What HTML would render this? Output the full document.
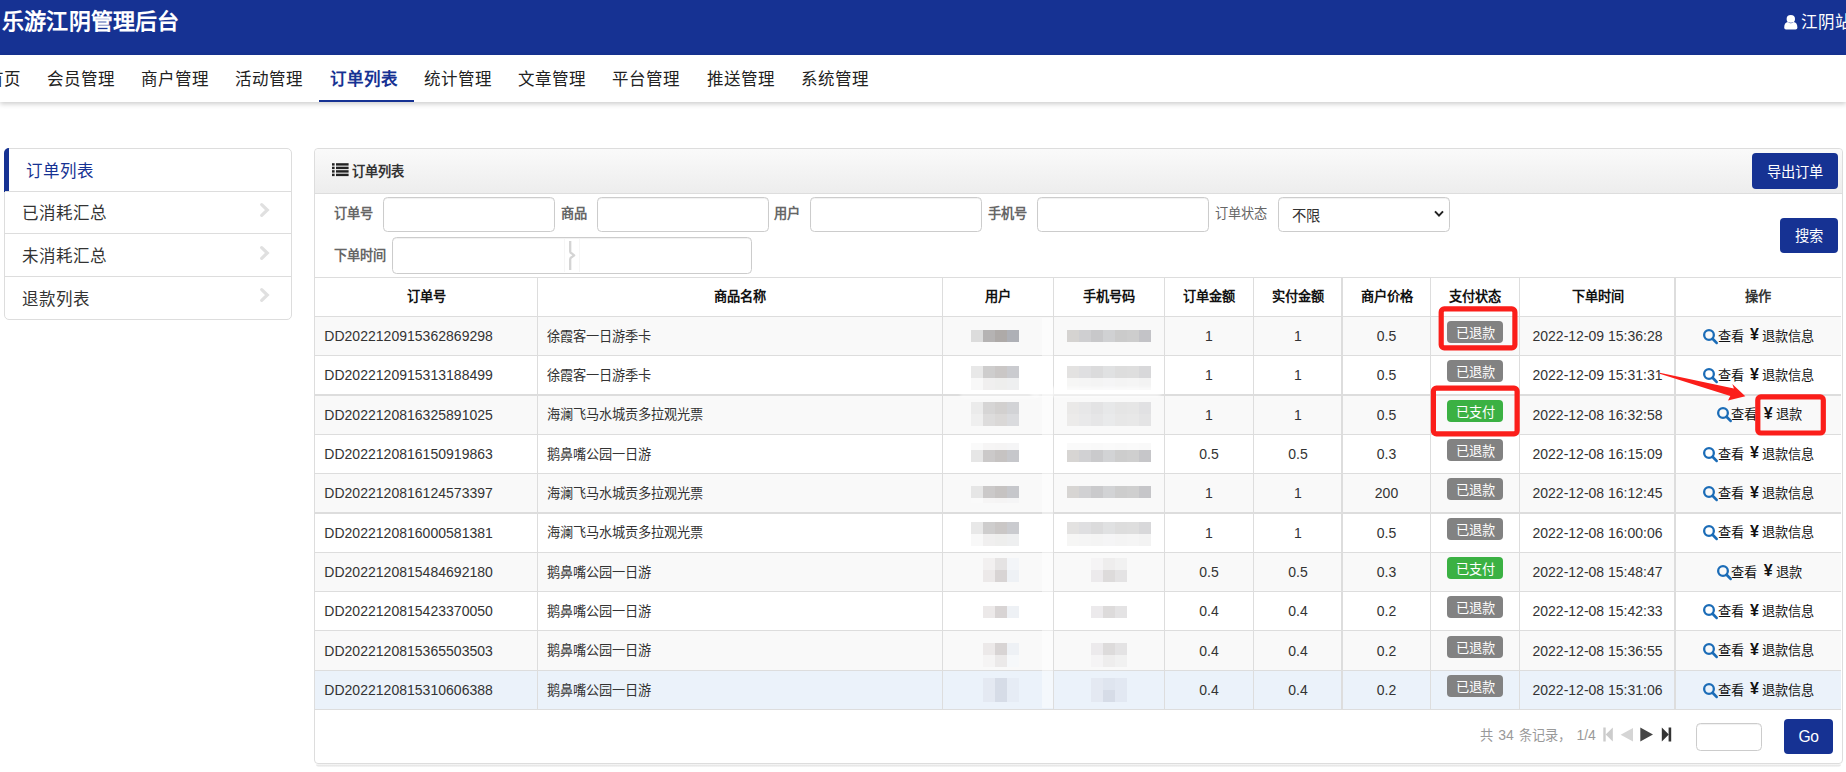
<!DOCTYPE html>
<html lang="zh-CN">
<head>
<meta charset="utf-8">
<title>乐游江阴管理后台</title>
<style>
*{box-sizing:border-box;margin:0;padding:0}
html,body{width:1846px;height:772px;overflow:hidden;background:#fff}
body{position:relative;font-family:"Liberation Sans",sans-serif;font-size:13.2px;color:#333}
.abs{position:absolute;white-space:nowrap}
#hdr{left:0;top:0;width:1846px;height:55px;background:#163293}
#title{left:2px;top:8.3px;font-size:22px;font-weight:bold;color:#fff;line-height:28px;letter-spacing:0.2px}
#user{left:1801px;top:9px;font-size:16.5px;color:#fff;line-height:26px}
#nav{left:0;top:55px;width:1846px;height:47px;background:#fff;box-shadow:0 2px 5px rgba(0,0,0,.2)}
.nv{top:66.1px;font-size:16.5px;line-height:26px;color:#222}
.nv.on{color:#163293;font-weight:bold}
#uline{left:319px;top:100px;width:95px;height:2px;background:#163293}
#side{left:4px;top:148px;width:288px;height:172px;border:1px solid #ddd;border-radius:5px;background:#fff}
.si{left:0;width:286px;border-top:1px solid #ddd;font-size:16.5px;color:#333}
.si span{position:absolute;left:17px;line-height:26px}
.chev{position:absolute;left:255px}
#panel{left:314px;top:148px;width:1529px;height:616px;border:1px solid #ddd;border-radius:4px;background:#fff}
#phead{left:315px;top:149px;width:1527px;height:45px;border-bottom:1px solid #ddd;border-radius:4px 4px 0 0;background:linear-gradient(#fafafa,#ededed)}
.btn{background:#163293;color:#fff;border-radius:4px;text-align:center;font-size:14.3px}
.lab{font-size:13.2px;font-weight:bold;color:#666;line-height:20px}
.inp{border:1px solid #ccc;border-radius:4.5px;background:#fff;box-shadow:inset 0 1px 1px rgba(0,0,0,.06)}
.th{font-weight:bold;color:#111;text-align:center;line-height:20px;font-size:13.2px}
.row{left:315px;width:1526px}
.hl{left:315px;width:1526px;background:#ddd}
.vl{top:278px;width:1px;height:432px;background:#ddd}
.c{line-height:20px;font-size:13.2px;color:#333}
.n{font-size:14px;color:#333;line-height:20px}
.ctr{text-align:center}
.bdg{width:56px;height:22px;border-radius:4px;color:#fff;text-align:center;font-size:13.2px;line-height:26px}
.g{background:#828282}.p{background:#3bb143}
.mz{position:absolute;width:12px;height:12px}
</style>
</head>
<body>
<div id="hdr" class="abs"></div>
<div id="title" class="abs">乐游江阴管理后台</div>
<svg class="abs" style="left:1784px;top:15px" width="14" height="15" viewBox="0 0 14 15"><ellipse cx="6.8" cy="3.9" rx="4.2" ry="3.85" fill="#fff"/><path d="M0.2 12.6 C0.2 9 1.6 7.3 4 7 C4.8 7.8 5.8 8.2 6.8 8.2 C7.8 8.2 8.8 7.8 9.6 7 C12 7.3 13.4 9 13.4 12.6 C13.4 13.8 12.6 14.5 11.6 14.5 L2 14.5 C1 14.5 0.2 13.8 0.2 12.6 Z" fill="#fff"/></svg>
<div id="user" class="abs">江阴站</div>
<div id="nav" class="abs"></div>
<div class="abs nv" style="left:-13.40px">首页</div>
<div class="abs nv" style="left:46.80px">会员管理</div>
<div class="abs nv" style="left:141.05px">商户管理</div>
<div class="abs nv" style="left:235.30px">活动管理</div>
<div class="abs nv on" style="left:330.05px">订单列表</div>
<div class="abs nv" style="left:423.80px">统计管理</div>
<div class="abs nv" style="left:518.05px">文章管理</div>
<div class="abs nv" style="left:612.30px">平台管理</div>
<div class="abs nv" style="left:706.55px">推送管理</div>
<div class="abs nv" style="left:800.80px">系统管理</div>
<div id="uline" class="abs"></div>
<div id="side" class="abs"></div>
<div class="abs" style="left:4px;top:148px;width:5px;height:44px;background:#163293;border-radius:5px 0 0 0"></div>
<div class="abs" style="left:5px;top:191px;width:286px;height:1px;background:#ddd"></div>
<div class="abs" style="left:5px;top:233px;width:286px;height:1px;background:#ddd"></div>
<div class="abs" style="left:5px;top:276px;width:286px;height:1px;background:#ddd"></div>
<div class="abs" style="left:26px;top:157.5px;font-size:16.5px;line-height:26px;color:#163293">订单列表</div>
<div class="abs" style="left:22px;top:200.1px;font-size:16.5px;line-height:26px;color:#333">已消耗汇总</div>
<svg class="abs" style="left:256px;top:199.8px" width="16" height="20" viewBox="0 0 16 20"><path d="M5.7 4.7 L11.3 10 L5.7 15.3" fill="none" stroke="#e0e0e0" stroke-width="3.2" stroke-linecap="round"/></svg>
<div class="abs" style="left:22px;top:242.8px;font-size:16.5px;line-height:26px;color:#333">未消耗汇总</div>
<svg class="abs" style="left:256px;top:242.8px" width="16" height="20" viewBox="0 0 16 20"><path d="M5.7 4.7 L11.3 10 L5.7 15.3" fill="none" stroke="#e0e0e0" stroke-width="3.2" stroke-linecap="round"/></svg>
<div class="abs" style="left:22px;top:285.8px;font-size:16.5px;line-height:26px;color:#333">退款列表</div>
<svg class="abs" style="left:256px;top:285.0px" width="16" height="20" viewBox="0 0 16 20"><path d="M5.7 4.7 L11.3 10 L5.7 15.3" fill="none" stroke="#e0e0e0" stroke-width="3.2" stroke-linecap="round"/></svg>
<div class="abs" style="left:316px;top:764px;width:1525px;height:3px;border-radius:0 0 4px 4px;background:linear-gradient(#fdfdfd,#e6e6e6 40%,#ececec 70%,#f8f8f8)"></div>
<div id="panel" class="abs"></div>
<div id="phead" class="abs"></div>
<svg class="abs" style="left:332px;top:163px" width="17" height="14" viewBox="0 0 17 14"><rect x="0" y="0.2" width="2.6" height="2.4" fill="#222"/><rect x="4" y="0.2" width="12.6" height="2.4" fill="#222"/><rect x="0" y="3.7" width="2.6" height="2.4" fill="#222"/><rect x="4" y="3.7" width="12.6" height="2.4" fill="#222"/><rect x="0" y="7.2" width="2.6" height="2.4" fill="#222"/><rect x="4" y="7.2" width="12.6" height="2.4" fill="#222"/><rect x="0" y="10.7" width="2.6" height="2.4" fill="#222"/><rect x="4" y="10.7" width="12.6" height="2.4" fill="#222"/></svg>
<div class="abs" style="left:351.8px;top:161.6px;font-size:13.2px;font-weight:bold;color:#333;letter-spacing:0.15px;line-height:20px">订单列表</div>
<div class="abs btn" style="left:1752px;top:153px;width:86px;height:36px;line-height:38px">导出订单</div>
<div class="abs btn" style="left:1780px;top:218px;width:58px;height:35px;line-height:36px">搜索</div>
<div class="abs lab" style="left:333.5px;top:204px">订单号</div>
<div class="abs lab" style="left:560.8px;top:204px">商品</div>
<div class="abs lab" style="left:774.4px;top:204px">用户</div>
<div class="abs lab" style="left:987.8px;top:204px">手机号</div>
<div class="abs lab" style="left:1215px;top:204px;font-weight:normal">订单状态</div>
<div class="abs inp" style="left:383px;top:197px;width:172px;height:35px"></div>
<div class="abs inp" style="left:597px;top:197px;width:172px;height:35px"></div>
<div class="abs inp" style="left:810px;top:197px;width:172px;height:35px"></div>
<div class="abs inp" style="left:1037px;top:197px;width:172px;height:35px"></div>
<div class="abs inp" style="left:1278px;top:197px;width:172px;height:35px"></div>
<div class="abs" style="left:1292px;top:205.5px;font-size:14.3px;color:#333;line-height:20px">不限</div>
<svg class="abs" style="left:1434px;top:210px" width="10" height="8" viewBox="0 0 10 8"><path d="M1 1.4 L5 5.6 L9 1.4" fill="none" stroke="#222" stroke-width="2"/></svg>
<div class="abs lab" style="left:334px;top:246px">下单时间</div>
<div class="abs inp" style="left:392px;top:237px;width:360px;height:37px"></div>
<div class="abs" style="left:564px;top:239px;width:16px;height:33px;background:#fff;border-left:1px solid #f6f6f6;border-right:1px solid #f6f6f6"></div>
<svg class="abs" style="left:560px;top:236px" width="24" height="40" viewBox="560 236 24 40"><path d="M570.2 241 L570.2 251.4 Q570.2 252.6 571.4 253.2 L574.2 255.3 L571.4 257.4 Q570.2 258 570.2 259.2 L570.2 270" fill="none" stroke="#d4d4d4" stroke-width="2.3" stroke-linejoin="round"/></svg>
<div class="abs row" style="top:317px;height:38px;background:#f9f9f9"></div>
<div class="abs row" style="top:356px;height:38px;background:#fff"></div>
<div class="abs row" style="top:396px;height:38px;background:#f9f9f9"></div>
<div class="abs row" style="top:435px;height:38px;background:#fff"></div>
<div class="abs row" style="top:474px;height:38px;background:#f9f9f9"></div>
<div class="abs row" style="top:514px;height:38px;background:#fff"></div>
<div class="abs row" style="top:553px;height:38px;background:#f9f9f9"></div>
<div class="abs row" style="top:592px;height:38px;background:#fff"></div>
<div class="abs row" style="top:631px;height:39px;background:#f9f9f9"></div>
<div class="abs row" style="top:671px;height:38px;background:#ebf2fa"></div>
<div class="abs hl" style="top:277px;height:1px"></div>
<div class="abs hl" style="top:316px;height:1px"></div>
<div class="abs hl" style="top:355px;height:1px"></div>
<div class="abs hl" style="top:394px;height:2px"></div>
<div class="abs hl" style="top:434px;height:1px"></div>
<div class="abs hl" style="top:473px;height:1px"></div>
<div class="abs hl" style="top:512px;height:2px"></div>
<div class="abs hl" style="top:552px;height:1px"></div>
<div class="abs hl" style="top:591px;height:1px"></div>
<div class="abs hl" style="top:630px;height:1px"></div>
<div class="abs hl" style="top:670px;height:1px"></div>
<div class="abs hl" style="top:709px;height:1px"></div>
<div class="abs vl" style="left:537px"></div>
<div class="abs vl" style="left:942px"></div>
<div class="abs vl" style="left:1053px"></div>
<div class="abs vl" style="left:1164px"></div>
<div class="abs vl" style="left:1253px"></div>
<div class="abs vl" style="left:1341px;width:2px"></div>
<div class="abs vl" style="left:1430px"></div>
<div class="abs vl" style="left:1519px"></div>
<div class="abs vl" style="left:1674px;width:2px"></div>
<div class="abs th" style="left:315px;width:222px;top:287px">订单号</div>
<div class="abs th" style="left:538px;width:404px;top:287px">商品名称</div>
<div class="abs th" style="left:943px;width:110px;top:287px">用户</div>
<div class="abs th" style="left:1054px;width:110px;top:287px">手机号码</div>
<div class="abs th" style="left:1165px;width:88px;top:287px">订单金额</div>
<div class="abs th" style="left:1254px;width:88px;top:287px">实付金额</div>
<div class="abs th" style="left:1343px;width:87px;top:287px">商户价格</div>
<div class="abs th" style="left:1431px;width:88px;top:287px">支付状态</div>
<div class="abs th" style="left:1520px;width:155px;top:287px">下单时间</div>
<div class="abs th" style="left:1676px;width:164px;top:287px;color:#333">操作</div>
<div class="abs n" style="left:324.3px;top:326.00px;letter-spacing:0.02px">DD2022120915362869298</div>
<div class="abs c" style="left:547px;top:326.7px">徐霞客一日游季卡</div>
<div class="abs n ctr" style="left:1165px;width:88px;top:326.00px">1</div>
<div class="abs n ctr" style="left:1254px;width:88px;top:326.00px">1</div>
<div class="abs n ctr" style="left:1343px;width:87px;top:326.00px">0.5</div>
<div class="abs bdg g" style="left:1447px;top:321px">已退款</div>
<div class="abs n ctr" style="left:1520px;width:155px;top:326.00px">2022-12-09 15:36:28</div>
<svg class="abs" style="left:1702.8px;top:328.6px" width="16" height="16" viewBox="0 0 16 16"><circle cx="6" cy="6" r="4.85" fill="none" stroke="#1b6cb7" stroke-width="2.3"/><path d="M9.6 9.7 L13.6 13.9" stroke="#1b6cb7" stroke-width="2.7" stroke-linecap="round"/></svg>
<div class="abs c" style="left:1717.6px;top:326.7px;color:#111">查看</div>
<div class="abs" style="left:1749.9px;top:325.2px;font-size:16px;font-weight:bold;color:#111;line-height:20px">¥</div>
<div class="abs c" style="left:1761.9px;top:326.7px;color:#111">退款信息</div>
<div class="abs n" style="left:324.3px;top:365.33px;letter-spacing:0.02px">DD2022120915313188499</div>
<div class="abs c" style="left:547px;top:366.0px">徐霞客一日游季卡</div>
<div class="abs n ctr" style="left:1165px;width:88px;top:365.33px">1</div>
<div class="abs n ctr" style="left:1254px;width:88px;top:365.33px">1</div>
<div class="abs n ctr" style="left:1343px;width:87px;top:365.33px">0.5</div>
<div class="abs bdg g" style="left:1447px;top:360px">已退款</div>
<div class="abs n ctr" style="left:1520px;width:155px;top:365.33px">2022-12-09 15:31:31</div>
<svg class="abs" style="left:1702.8px;top:367.9px" width="16" height="16" viewBox="0 0 16 16"><circle cx="6" cy="6" r="4.85" fill="none" stroke="#1b6cb7" stroke-width="2.3"/><path d="M9.6 9.7 L13.6 13.9" stroke="#1b6cb7" stroke-width="2.7" stroke-linecap="round"/></svg>
<div class="abs c" style="left:1717.6px;top:366.0px;color:#111">查看</div>
<div class="abs" style="left:1749.9px;top:364.5px;font-size:16px;font-weight:bold;color:#111;line-height:20px">¥</div>
<div class="abs c" style="left:1761.9px;top:366.0px;color:#111">退款信息</div>
<div class="abs n" style="left:324.3px;top:404.66px;letter-spacing:0.02px">DD2022120816325891025</div>
<div class="abs c" style="left:547px;top:405.4px">海澜飞马水城贡多拉观光票</div>
<div class="abs n ctr" style="left:1165px;width:88px;top:404.66px">1</div>
<div class="abs n ctr" style="left:1254px;width:88px;top:404.66px">1</div>
<div class="abs n ctr" style="left:1343px;width:87px;top:404.66px">0.5</div>
<div class="abs bdg p" style="left:1447px;top:400px">已支付</div>
<div class="abs n ctr" style="left:1520px;width:155px;top:404.66px">2022-12-08 16:32:58</div>
<svg class="abs" style="left:1716.6px;top:407.3px" width="16" height="16" viewBox="0 0 16 16"><circle cx="6" cy="6" r="4.85" fill="none" stroke="#1b6cb7" stroke-width="2.3"/><path d="M9.6 9.7 L13.6 13.9" stroke="#1b6cb7" stroke-width="2.7" stroke-linecap="round"/></svg>
<div class="abs c" style="left:1731.4px;top:405.4px;color:#111">查看</div>
<div class="abs" style="left:1763.7px;top:403.9px;font-size:16px;font-weight:bold;color:#111;line-height:20px">¥</div>
<div class="abs c" style="left:1775.7px;top:405.4px;color:#111">退款</div>
<div class="abs n" style="left:324.3px;top:443.99px;letter-spacing:0.02px">DD2022120816150919863</div>
<div class="abs c" style="left:547px;top:444.7px">鹅鼻嘴公园一日游</div>
<div class="abs n ctr" style="left:1165px;width:88px;top:443.99px">0.5</div>
<div class="abs n ctr" style="left:1254px;width:88px;top:443.99px">0.5</div>
<div class="abs n ctr" style="left:1343px;width:87px;top:443.99px">0.3</div>
<div class="abs bdg g" style="left:1447px;top:439px">已退款</div>
<div class="abs n ctr" style="left:1520px;width:155px;top:443.99px">2022-12-08 16:15:09</div>
<svg class="abs" style="left:1702.8px;top:446.6px" width="16" height="16" viewBox="0 0 16 16"><circle cx="6" cy="6" r="4.85" fill="none" stroke="#1b6cb7" stroke-width="2.3"/><path d="M9.6 9.7 L13.6 13.9" stroke="#1b6cb7" stroke-width="2.7" stroke-linecap="round"/></svg>
<div class="abs c" style="left:1717.6px;top:444.7px;color:#111">查看</div>
<div class="abs" style="left:1749.9px;top:443.2px;font-size:16px;font-weight:bold;color:#111;line-height:20px">¥</div>
<div class="abs c" style="left:1761.9px;top:444.7px;color:#111">退款信息</div>
<div class="abs n" style="left:324.3px;top:483.32px;letter-spacing:0.02px">DD2022120816124573397</div>
<div class="abs c" style="left:547px;top:484.0px">海澜飞马水城贡多拉观光票</div>
<div class="abs n ctr" style="left:1165px;width:88px;top:483.32px">1</div>
<div class="abs n ctr" style="left:1254px;width:88px;top:483.32px">1</div>
<div class="abs n ctr" style="left:1343px;width:87px;top:483.32px">200</div>
<div class="abs bdg g" style="left:1447px;top:478px">已退款</div>
<div class="abs n ctr" style="left:1520px;width:155px;top:483.32px">2022-12-08 16:12:45</div>
<svg class="abs" style="left:1702.8px;top:485.9px" width="16" height="16" viewBox="0 0 16 16"><circle cx="6" cy="6" r="4.85" fill="none" stroke="#1b6cb7" stroke-width="2.3"/><path d="M9.6 9.7 L13.6 13.9" stroke="#1b6cb7" stroke-width="2.7" stroke-linecap="round"/></svg>
<div class="abs c" style="left:1717.6px;top:484.0px;color:#111">查看</div>
<div class="abs" style="left:1749.9px;top:482.5px;font-size:16px;font-weight:bold;color:#111;line-height:20px">¥</div>
<div class="abs c" style="left:1761.9px;top:484.0px;color:#111">退款信息</div>
<div class="abs n" style="left:324.3px;top:522.65px;letter-spacing:0.02px">DD2022120816000581381</div>
<div class="abs c" style="left:547px;top:523.4px">海澜飞马水城贡多拉观光票</div>
<div class="abs n ctr" style="left:1165px;width:88px;top:522.65px">1</div>
<div class="abs n ctr" style="left:1254px;width:88px;top:522.65px">1</div>
<div class="abs n ctr" style="left:1343px;width:87px;top:522.65px">0.5</div>
<div class="abs bdg g" style="left:1447px;top:518px">已退款</div>
<div class="abs n ctr" style="left:1520px;width:155px;top:522.65px">2022-12-08 16:00:06</div>
<svg class="abs" style="left:1702.8px;top:525.2px" width="16" height="16" viewBox="0 0 16 16"><circle cx="6" cy="6" r="4.85" fill="none" stroke="#1b6cb7" stroke-width="2.3"/><path d="M9.6 9.7 L13.6 13.9" stroke="#1b6cb7" stroke-width="2.7" stroke-linecap="round"/></svg>
<div class="abs c" style="left:1717.6px;top:523.4px;color:#111">查看</div>
<div class="abs" style="left:1749.9px;top:521.9px;font-size:16px;font-weight:bold;color:#111;line-height:20px">¥</div>
<div class="abs c" style="left:1761.9px;top:523.4px;color:#111">退款信息</div>
<div class="abs n" style="left:324.3px;top:561.98px;letter-spacing:0.02px">DD2022120815484692180</div>
<div class="abs c" style="left:547px;top:562.7px">鹅鼻嘴公园一日游</div>
<div class="abs n ctr" style="left:1165px;width:88px;top:561.98px">0.5</div>
<div class="abs n ctr" style="left:1254px;width:88px;top:561.98px">0.5</div>
<div class="abs n ctr" style="left:1343px;width:87px;top:561.98px">0.3</div>
<div class="abs bdg p" style="left:1447px;top:557px">已支付</div>
<div class="abs n ctr" style="left:1520px;width:155px;top:561.98px">2022-12-08 15:48:47</div>
<svg class="abs" style="left:1716.6px;top:564.6px" width="16" height="16" viewBox="0 0 16 16"><circle cx="6" cy="6" r="4.85" fill="none" stroke="#1b6cb7" stroke-width="2.3"/><path d="M9.6 9.7 L13.6 13.9" stroke="#1b6cb7" stroke-width="2.7" stroke-linecap="round"/></svg>
<div class="abs c" style="left:1731.4px;top:562.7px;color:#111">查看</div>
<div class="abs" style="left:1763.7px;top:561.2px;font-size:16px;font-weight:bold;color:#111;line-height:20px">¥</div>
<div class="abs c" style="left:1775.7px;top:562.7px;color:#111">退款</div>
<div class="abs n" style="left:324.3px;top:601.31px;letter-spacing:0.02px">DD2022120815423370050</div>
<div class="abs c" style="left:547px;top:602.0px">鹅鼻嘴公园一日游</div>
<div class="abs n ctr" style="left:1165px;width:88px;top:601.31px">0.4</div>
<div class="abs n ctr" style="left:1254px;width:88px;top:601.31px">0.4</div>
<div class="abs n ctr" style="left:1343px;width:87px;top:601.31px">0.2</div>
<div class="abs bdg g" style="left:1447px;top:596px">已退款</div>
<div class="abs n ctr" style="left:1520px;width:155px;top:601.31px">2022-12-08 15:42:33</div>
<svg class="abs" style="left:1702.8px;top:603.9px" width="16" height="16" viewBox="0 0 16 16"><circle cx="6" cy="6" r="4.85" fill="none" stroke="#1b6cb7" stroke-width="2.3"/><path d="M9.6 9.7 L13.6 13.9" stroke="#1b6cb7" stroke-width="2.7" stroke-linecap="round"/></svg>
<div class="abs c" style="left:1717.6px;top:602.0px;color:#111">查看</div>
<div class="abs" style="left:1749.9px;top:600.5px;font-size:16px;font-weight:bold;color:#111;line-height:20px">¥</div>
<div class="abs c" style="left:1761.9px;top:602.0px;color:#111">退款信息</div>
<div class="abs n" style="left:324.3px;top:640.64px;letter-spacing:0.02px">DD2022120815365503503</div>
<div class="abs c" style="left:547px;top:641.3px">鹅鼻嘴公园一日游</div>
<div class="abs n ctr" style="left:1165px;width:88px;top:640.64px">0.4</div>
<div class="abs n ctr" style="left:1254px;width:88px;top:640.64px">0.4</div>
<div class="abs n ctr" style="left:1343px;width:87px;top:640.64px">0.2</div>
<div class="abs bdg g" style="left:1447px;top:636px">已退款</div>
<div class="abs n ctr" style="left:1520px;width:155px;top:640.64px">2022-12-08 15:36:55</div>
<svg class="abs" style="left:1702.8px;top:643.2px" width="16" height="16" viewBox="0 0 16 16"><circle cx="6" cy="6" r="4.85" fill="none" stroke="#1b6cb7" stroke-width="2.3"/><path d="M9.6 9.7 L13.6 13.9" stroke="#1b6cb7" stroke-width="2.7" stroke-linecap="round"/></svg>
<div class="abs c" style="left:1717.6px;top:641.3px;color:#111">查看</div>
<div class="abs" style="left:1749.9px;top:639.8px;font-size:16px;font-weight:bold;color:#111;line-height:20px">¥</div>
<div class="abs c" style="left:1761.9px;top:641.3px;color:#111">退款信息</div>
<div class="abs n" style="left:324.3px;top:679.97px;letter-spacing:0.02px">DD2022120815310606388</div>
<div class="abs c" style="left:547px;top:680.7px">鹅鼻嘴公园一日游</div>
<div class="abs n ctr" style="left:1165px;width:88px;top:679.97px">0.4</div>
<div class="abs n ctr" style="left:1254px;width:88px;top:679.97px">0.4</div>
<div class="abs n ctr" style="left:1343px;width:87px;top:679.97px">0.2</div>
<div class="abs bdg g" style="left:1447px;top:675px">已退款</div>
<div class="abs n ctr" style="left:1520px;width:155px;top:679.97px">2022-12-08 15:31:06</div>
<svg class="abs" style="left:1702.8px;top:682.6px" width="16" height="16" viewBox="0 0 16 16"><circle cx="6" cy="6" r="4.85" fill="none" stroke="#1b6cb7" stroke-width="2.3"/><path d="M9.6 9.7 L13.6 13.9" stroke="#1b6cb7" stroke-width="2.7" stroke-linecap="round"/></svg>
<div class="abs c" style="left:1717.6px;top:680.7px;color:#111">查看</div>
<div class="abs" style="left:1749.9px;top:679.2px;font-size:16px;font-weight:bold;color:#111;line-height:20px">¥</div>
<div class="abs c" style="left:1761.9px;top:680.7px;color:#111">退款信息</div>
<div class="mz" style="left:971px;top:330px;background:#dcdcdc;width:12px;height:12px"></div>
<div class="mz" style="left:983px;top:330px;background:#b5b3b3;width:12px;height:12px"></div>
<div class="mz" style="left:995px;top:330px;background:#aeaaa8;width:12px;height:12px"></div>
<div class="mz" style="left:1007px;top:330px;background:#aeb0b6;width:12px;height:12px"></div>
<div class="mz" style="left:1067px;top:330px;background:#d5d3d1;width:12px;height:12px"></div>
<div class="mz" style="left:1079px;top:330px;background:#cfcfd1;width:12px;height:12px"></div>
<div class="mz" style="left:1091px;top:330px;background:#c8c8ca;width:12px;height:12px"></div>
<div class="mz" style="left:1103px;top:330px;background:#d0d1d3;width:12px;height:12px"></div>
<div class="mz" style="left:1115px;top:330px;background:#cbcbcb;width:12px;height:12px"></div>
<div class="mz" style="left:1127px;top:330px;background:#cdcdcd;width:12px;height:12px"></div>
<div class="mz" style="left:1139px;top:330px;background:#c3c3c7;width:12px;height:12px"></div>
<div class="mz" style="left:971px;top:366px;background:#e8e8e8;width:12px;height:12px"></div>
<div class="mz" style="left:983px;top:366px;background:#cecdcd;width:12px;height:12px"></div>
<div class="mz" style="left:995px;top:366px;background:#cac7c6;width:12px;height:12px"></div>
<div class="mz" style="left:1007px;top:366px;background:#cacbcf;width:12px;height:12px"></div>
<div class="mz" style="left:1067px;top:366px;background:#e3e2e1;width:12px;height:12px"></div>
<div class="mz" style="left:1079px;top:366px;background:#dfdfe1;width:12px;height:12px"></div>
<div class="mz" style="left:1091px;top:366px;background:#dbdbdc;width:12px;height:12px"></div>
<div class="mz" style="left:1103px;top:366px;background:#e0e1e2;width:12px;height:12px"></div>
<div class="mz" style="left:1115px;top:366px;background:#dddddd;width:12px;height:12px"></div>
<div class="mz" style="left:1127px;top:366px;background:#dedede;width:12px;height:12px"></div>
<div class="mz" style="left:1139px;top:366px;background:#d8d8da;width:12px;height:12px"></div>
<div class="mz" style="left:971px;top:378px;background:#f8f8f8;width:12px;height:12px"></div>
<div class="mz" style="left:983px;top:378px;background:#f0efef;width:12px;height:12px"></div>
<div class="mz" style="left:995px;top:378px;background:#eeeeed;width:12px;height:12px"></div>
<div class="mz" style="left:1007px;top:378px;background:#eeeff0;width:12px;height:12px"></div>
<div class="mz" style="left:1067px;top:378px;background:#f6f6f5;width:12px;height:12px"></div>
<div class="mz" style="left:1079px;top:378px;background:#f5f5f5;width:12px;height:12px"></div>
<div class="mz" style="left:1091px;top:378px;background:#f4f4f4;width:12px;height:12px"></div>
<div class="mz" style="left:1103px;top:378px;background:#f5f5f6;width:12px;height:12px"></div>
<div class="mz" style="left:1115px;top:378px;background:#f4f4f4;width:12px;height:12px"></div>
<div class="mz" style="left:1127px;top:378px;background:#f5f5f5;width:12px;height:12px"></div>
<div class="mz" style="left:1139px;top:378px;background:#f3f3f3;width:12px;height:12px"></div>
<div class="mz" style="left:971px;top:402px;background:#ebebeb;width:12px;height:12px"></div>
<div class="mz" style="left:983px;top:402px;background:#d6d5d5;width:12px;height:12px"></div>
<div class="mz" style="left:995px;top:402px;background:#d2d0cf;width:12px;height:12px"></div>
<div class="mz" style="left:1007px;top:402px;background:#d2d3d6;width:12px;height:12px"></div>
<div class="mz" style="left:1067px;top:402px;background:#eae9e8;width:12px;height:12px"></div>
<div class="mz" style="left:1079px;top:402px;background:#e7e7e8;width:12px;height:12px"></div>
<div class="mz" style="left:1091px;top:402px;background:#e3e3e4;width:12px;height:12px"></div>
<div class="mz" style="left:1103px;top:402px;background:#e7e8e9;width:12px;height:12px"></div>
<div class="mz" style="left:1115px;top:402px;background:#e5e5e5;width:12px;height:12px"></div>
<div class="mz" style="left:1127px;top:402px;background:#e6e6e6;width:12px;height:12px"></div>
<div class="mz" style="left:1139px;top:402px;background:#e1e1e3;width:12px;height:12px"></div>
<div class="mz" style="left:971px;top:414px;background:#efefef;width:12px;height:12px"></div>
<div class="mz" style="left:983px;top:414px;background:#dddcdc;width:12px;height:12px"></div>
<div class="mz" style="left:995px;top:414px;background:#dad8d7;width:12px;height:12px"></div>
<div class="mz" style="left:1007px;top:414px;background:#dadbde;width:12px;height:12px"></div>
<div class="mz" style="left:1067px;top:414px;background:#ecebea;width:12px;height:12px"></div>
<div class="mz" style="left:1079px;top:414px;background:#e9e9ea;width:12px;height:12px"></div>
<div class="mz" style="left:1091px;top:414px;background:#e6e6e7;width:12px;height:12px"></div>
<div class="mz" style="left:1103px;top:414px;background:#e9eaeb;width:12px;height:12px"></div>
<div class="mz" style="left:1115px;top:414px;background:#e7e7e7;width:12px;height:12px"></div>
<div class="mz" style="left:1127px;top:414px;background:#e8e8e8;width:12px;height:12px"></div>
<div class="mz" style="left:1139px;top:414px;background:#e4e4e5;width:12px;height:12px"></div>
<div class="mz" style="left:971px;top:450px;background:#e6e6e6;width:12px;height:12px"></div>
<div class="mz" style="left:983px;top:450px;background:#cbc9c9;width:12px;height:12px"></div>
<div class="mz" style="left:995px;top:450px;background:#c6c3c2;width:12px;height:12px"></div>
<div class="mz" style="left:1007px;top:450px;background:#c6c7cb;width:12px;height:12px"></div>
<div class="mz" style="left:1067px;top:450px;background:#d7d5d3;width:12px;height:12px"></div>
<div class="mz" style="left:1079px;top:450px;background:#d1d1d3;width:12px;height:12px"></div>
<div class="mz" style="left:1091px;top:450px;background:#cacacc;width:12px;height:12px"></div>
<div class="mz" style="left:1103px;top:450px;background:#d2d3d5;width:12px;height:12px"></div>
<div class="mz" style="left:1115px;top:450px;background:#cdcdcd;width:12px;height:12px"></div>
<div class="mz" style="left:1127px;top:450px;background:#cfcfcf;width:12px;height:12px"></div>
<div class="mz" style="left:1139px;top:450px;background:#c6c6c9;width:12px;height:12px"></div>
<div class="mz" style="left:971px;top:486px;background:#e6e6e6;width:12px;height:12px"></div>
<div class="mz" style="left:983px;top:486px;background:#cbc9c9;width:12px;height:12px"></div>
<div class="mz" style="left:995px;top:486px;background:#c6c3c2;width:12px;height:12px"></div>
<div class="mz" style="left:1007px;top:486px;background:#c6c7cb;width:12px;height:12px"></div>
<div class="mz" style="left:1067px;top:486px;background:#d7d5d3;width:12px;height:12px"></div>
<div class="mz" style="left:1079px;top:486px;background:#d1d1d3;width:12px;height:12px"></div>
<div class="mz" style="left:1091px;top:486px;background:#cacacc;width:12px;height:12px"></div>
<div class="mz" style="left:1103px;top:486px;background:#d2d3d5;width:12px;height:12px"></div>
<div class="mz" style="left:1115px;top:486px;background:#cdcdcd;width:12px;height:12px"></div>
<div class="mz" style="left:1127px;top:486px;background:#cfcfcf;width:12px;height:12px"></div>
<div class="mz" style="left:1139px;top:486px;background:#c6c6c9;width:12px;height:12px"></div>
<div class="mz" style="left:971px;top:522px;background:#e8e8e8;width:12px;height:12px"></div>
<div class="mz" style="left:983px;top:522px;background:#cecdcd;width:12px;height:12px"></div>
<div class="mz" style="left:995px;top:522px;background:#cac7c6;width:12px;height:12px"></div>
<div class="mz" style="left:1007px;top:522px;background:#cacbcf;width:12px;height:12px"></div>
<div class="mz" style="left:1067px;top:522px;background:#e3e2e1;width:12px;height:12px"></div>
<div class="mz" style="left:1079px;top:522px;background:#dfdfe1;width:12px;height:12px"></div>
<div class="mz" style="left:1091px;top:522px;background:#dbdbdc;width:12px;height:12px"></div>
<div class="mz" style="left:1103px;top:522px;background:#e0e1e2;width:12px;height:12px"></div>
<div class="mz" style="left:1115px;top:522px;background:#dddddd;width:12px;height:12px"></div>
<div class="mz" style="left:1127px;top:522px;background:#dedede;width:12px;height:12px"></div>
<div class="mz" style="left:1139px;top:522px;background:#d8d8da;width:12px;height:12px"></div>
<div class="mz" style="left:971px;top:534px;background:#f8f8f8;width:12px;height:12px"></div>
<div class="mz" style="left:983px;top:534px;background:#f0efef;width:12px;height:12px"></div>
<div class="mz" style="left:995px;top:534px;background:#eeeeed;width:12px;height:12px"></div>
<div class="mz" style="left:1007px;top:534px;background:#eeeff0;width:12px;height:12px"></div>
<div class="mz" style="left:1067px;top:534px;background:#f6f6f5;width:12px;height:12px"></div>
<div class="mz" style="left:1079px;top:534px;background:#f5f5f5;width:12px;height:12px"></div>
<div class="mz" style="left:1091px;top:534px;background:#f4f4f4;width:12px;height:12px"></div>
<div class="mz" style="left:1103px;top:534px;background:#f5f5f6;width:12px;height:12px"></div>
<div class="mz" style="left:1115px;top:534px;background:#f4f4f4;width:12px;height:12px"></div>
<div class="mz" style="left:1127px;top:534px;background:#f5f5f5;width:12px;height:12px"></div>
<div class="mz" style="left:1139px;top:534px;background:#f3f3f3;width:12px;height:12px"></div>
<div class="mz" style="left:971px;top:443px;background:#fafafa;width:12px;height:7px"></div>
<div class="mz" style="left:983px;top:443px;background:#f6f5f5;width:12px;height:7px"></div>
<div class="mz" style="left:995px;top:443px;background:#f5f4f4;width:12px;height:7px"></div>
<div class="mz" style="left:1007px;top:443px;background:#f5f5f6;width:12px;height:7px"></div>
<div class="mz" style="left:1067px;top:443px;background:#fafafa;width:12px;height:7px"></div>
<div class="mz" style="left:1079px;top:443px;background:#fafafa;width:12px;height:7px"></div>
<div class="mz" style="left:1091px;top:443px;background:#f9f9f9;width:12px;height:7px"></div>
<div class="mz" style="left:1103px;top:443px;background:#fafafa;width:12px;height:7px"></div>
<div class="mz" style="left:1115px;top:443px;background:#f9f9f9;width:12px;height:7px"></div>
<div class="mz" style="left:1127px;top:443px;background:#fafafa;width:12px;height:7px"></div>
<div class="mz" style="left:1139px;top:443px;background:#f9f9f9;width:12px;height:7px"></div>
<div class="mz" style="left:971px;top:498px;background:#fafafa;width:12px;height:5px"></div>
<div class="mz" style="left:983px;top:498px;background:#f6f5f5;width:12px;height:5px"></div>
<div class="mz" style="left:995px;top:498px;background:#f5f4f4;width:12px;height:5px"></div>
<div class="mz" style="left:1007px;top:498px;background:#f5f5f6;width:12px;height:5px"></div>
<div class="mz" style="left:983px;top:558px;background:#f2f0f0;width:12px;height:12px"></div>
<div class="mz" style="left:983px;top:570px;background:#ece9e9;width:12px;height:12px"></div>
<div class="mz" style="left:1091px;top:558px;background:#f5f4f5;width:12px;height:12px"></div>
<div class="mz" style="left:1091px;top:570px;background:#eceaec;width:12px;height:12px"></div>
<div class="mz" style="left:983px;top:606px;background:#ece9e9;width:12px;height:12px"></div>
<div class="mz" style="left:1091px;top:606px;background:#eceaec;width:12px;height:12px"></div>
<div class="mz" style="left:983px;top:643px;background:#ece9e9;width:12px;height:12px"></div>
<div class="mz" style="left:983px;top:655px;background:#f5f4f4;width:12px;height:12px"></div>
<div class="mz" style="left:1091px;top:643px;background:#eceaec;width:12px;height:12px"></div>
<div class="mz" style="left:1091px;top:655px;background:#f5f4f5;width:12px;height:12px"></div>
<div class="mz" style="left:995px;top:558px;background:#e5e3e3;width:12px;height:12px"></div>
<div class="mz" style="left:995px;top:570px;background:#d8d4d4;width:12px;height:12px"></div>
<div class="mz" style="left:1103px;top:558px;background:#eeeded;width:12px;height:12px"></div>
<div class="mz" style="left:1103px;top:570px;background:#dddbdb;width:12px;height:12px"></div>
<div class="mz" style="left:995px;top:606px;background:#d8d4d4;width:12px;height:12px"></div>
<div class="mz" style="left:1103px;top:606px;background:#dddbdb;width:12px;height:12px"></div>
<div class="mz" style="left:995px;top:643px;background:#d8d4d4;width:12px;height:12px"></div>
<div class="mz" style="left:995px;top:655px;background:#ebe9e9;width:12px;height:12px"></div>
<div class="mz" style="left:1103px;top:643px;background:#dddbdb;width:12px;height:12px"></div>
<div class="mz" style="left:1103px;top:655px;background:#eeeded;width:12px;height:12px"></div>
<div class="mz" style="left:1007px;top:558px;background:#f3f5f8;width:12px;height:12px"></div>
<div class="mz" style="left:1007px;top:570px;background:#eef1f5;width:12px;height:12px"></div>
<div class="mz" style="left:1115px;top:558px;background:#f1f1f1;width:12px;height:12px"></div>
<div class="mz" style="left:1115px;top:570px;background:#e4e3e4;width:12px;height:12px"></div>
<div class="mz" style="left:1007px;top:606px;background:#eef1f5;width:12px;height:12px"></div>
<div class="mz" style="left:1115px;top:606px;background:#e4e3e4;width:12px;height:12px"></div>
<div class="mz" style="left:1007px;top:643px;background:#eef1f5;width:12px;height:12px"></div>
<div class="mz" style="left:1007px;top:655px;background:#f6f8fa;width:12px;height:12px"></div>
<div class="mz" style="left:1115px;top:643px;background:#e4e3e4;width:12px;height:12px"></div>
<div class="mz" style="left:1115px;top:655px;background:#f1f1f1;width:12px;height:12px"></div>
<div class="mz" style="left:983px;top:678px;background:#e4e9f2;width:12px;height:12px"></div>
<div class="mz" style="left:983px;top:690px;background:#e4e9f2;width:12px;height:12px"></div>
<div class="mz" style="left:1091px;top:678px;background:#e4e9f2;width:12px;height:12px"></div>
<div class="mz" style="left:1091px;top:690px;background:#e4e9f2;width:12px;height:12px"></div>
<div class="mz" style="left:995px;top:678px;background:#d6dce7;width:12px;height:12px"></div>
<div class="mz" style="left:995px;top:690px;background:#d6dce7;width:12px;height:12px"></div>
<div class="mz" style="left:1103px;top:678px;background:#dfe5ef;width:12px;height:12px"></div>
<div class="mz" style="left:1103px;top:690px;background:#d6dce7;width:12px;height:12px"></div>
<div class="mz" style="left:1007px;top:678px;background:#e6ecf5;width:12px;height:12px"></div>
<div class="mz" style="left:1007px;top:690px;background:#e6ecf5;width:12px;height:12px"></div>
<div class="mz" style="left:1115px;top:678px;background:#e2e8f2;width:12px;height:12px"></div>
<div class="mz" style="left:1115px;top:690px;background:#e2e8f2;width:12px;height:12px"></div>
<div class="abs" style="left:1042px;top:318px;width:11px;height:390px;background:rgba(255,255,255,.45)"></div>
<div class="abs" style="left:1030px;top:387px;width:132px;height:10px;border-radius:5px;background:rgba(255,255,255,.55);filter:blur(1.5px)"></div>
<div class="abs" style="left:960px;top:391px;width:80px;height:7px;border-radius:4px;background:rgba(255,255,255,.4);filter:blur(1.5px)"></div>
<svg class="abs" style="left:0;top:0" width="1846" height="772" viewBox="0 0 1846 772"><g fill="none" stroke="#fb1e1a" stroke-width="5.2"><rect x="1441.2" y="308.9" width="73.7" height="38.9" rx="3" ry="3"/><rect x="1433.4" y="388.2" width="83.7" height="45.6" rx="3" ry="3"/><rect x="1757.8" y="396.9" width="65.5" height="36.1" rx="3" ry="3"/></g><polygon points="1659.7,372.8 1733.9,388.5 1732.3,384 1745.3,396.3 1728,400.5 1730.3,395.9 1659.7,373.8" fill="#fb1e1a"/></svg>
<div class="abs" style="left:1480px;top:725px;font-size:13.2px;color:#999;line-height:20px;word-spacing:1.6px">共 <span style="font-size:14px">34</span> 条记录， <span style="font-size:14px">1/4</span></div>
<svg class="abs" style="left:1603px;top:727px" width="70" height="15" viewBox="0 0 70 15"><rect x="0.3" y="0.5" width="2.4" height="14" fill="#ccc"/><polygon points="9.8,0.5 9.8,14.5 2.7,7.5" fill="#ccc"/><polygon points="30,1 30,14.5 17.6,7.7" fill="#d5d5d5"/><polygon points="37.3,0.5 37.3,14.5 50,7.5" fill="#444"/><polygon points="58.8,0.5 58.8,14.5 65.8,7.5" fill="#333"/><rect x="65.6" y="0.5" width="2.6" height="14" fill="#333"/></svg>
<div class="abs inp" style="left:1696px;top:723px;width:66px;height:28px"></div>
<div class="abs btn" style="left:1784px;top:719px;width:49px;height:35px;line-height:35px;font-size:15.6px;letter-spacing:-0.3px">Go</div>
</body>
</html>
